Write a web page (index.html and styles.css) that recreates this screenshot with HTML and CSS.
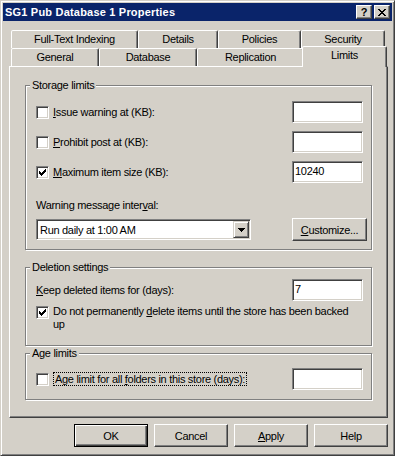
FILE: index.html
```html
<!DOCTYPE html>
<html lang="en">
<head>
    <meta charset="UTF-8">
    <title>SG1 Pub Database 1 Properties</title>
    <link rel="stylesheet" href="styles.css">
</head>
<body>
<div class="window">
    <div class="titlebar">
        <span class="title">SG1 Pub Database 1 Properties</span>
        <span class="caption">
            <span class="cap-btn help">?</span>
            <span class="cap-btn close">
                <svg width="8" height="7" viewBox="0 0 8 7"><path d="M0 0h2v1H0z M6 0h2v1H6z M1 1h2v1H1z M5 1h2v1H5z M2 2h4v1H2z M3 3h2v1H3z M2 4h4v1H2z M1 5h2v1H1z M5 5h2v1H5z M0 6h2v1H0z M6 6h2v1H6z" fill="#000"/></svg>
            </span>
        </span>
    </div>

    <div class="dialog">
        <div class="tabs">
            <div class="tab-row">
                <span class="tab t-fulltext">Full-Text Indexing</span>
                <span class="tab t-details">Details</span>
                <span class="tab t-policies">Policies</span>
                <span class="tab t-security">Security</span>
            </div>
            <div class="tab-row">
                <span class="tab t-general">General</span>
                <span class="tab t-database">Database</span>
                <span class="tab t-replication">Replication</span>
                <span class="tab t-limits active">Limits</span>
            </div>
        </div>

        <div class="panel">
            <fieldset class="group storage">
                <legend>Storage limits</legend>
                <div class="row">
                    <label class="check"><span class="box"></span><span><u>I</u>ssue warning at (KB):</span></label>
                    <span class="edit"></span>
                </div>
                <div class="row">
                    <label class="check"><span class="box"></span><span><u>P</u>rohibit post at (KB):</span></label>
                    <span class="edit"></span>
                </div>
                <div class="row">
                    <label class="check"><span class="box checked"><svg width="11" height="11" viewBox="0 0 11 11"><path d="M2 4h1v3H2z M3 5h1v3H3z M4 6h1v3H4z M5 5h1v3H5z M6 4h1v3H6z M7 3h1v3H7z M8 2h1v3H8z" fill="#000"/></svg></span><span><u>M</u>aximum item size (KB):</span></label>
                    <span class="edit">10240</span>
                </div>
                <p class="interval-label">Warning message inter<u>v</u>al:</p>
                <div class="combo-row">
                    <span class="combo">
                        <span class="value">Run daily at 1:00 AM</span>
                        <span class="drop"><svg width="7" height="4" viewBox="0 0 7 4"><path d="M0 0h7v1H0z M1 1h5v1H1z M2 2h3v1H2z M3 3h1v1H3z" fill="#000"/></svg></span>
                    </span>
                    <span class="btn customize"><span><u>C</u>ustomize...</span></span>
                </div>
            </fieldset>

            <fieldset class="group deletion">
                <legend>Deletion settings</legend>
                <div class="row">
                    <span class="plain"><u>K</u>eep deleted items for (days):</span>
                    <span class="edit">7</span>
                </div>
                <label class="check wrap">
                    <span class="box checked"><svg width="11" height="11" viewBox="0 0 11 11"><path d="M2 4h1v3H2z M3 5h1v3H3z M4 6h1v3H4z M5 5h1v3H5z M6 4h1v3H6z M7 3h1v3H7z M8 2h1v3H8z" fill="#000"/></svg></span>
                    <span class="text">Do not permanently <u>d</u>elete items until the store has been backed up</span>
                </label>
            </fieldset>

            <fieldset class="group age">
                <legend>Age limits</legend>
                <div class="row">
                    <label class="check"><span class="box"></span><span class="focus">Age limit for all <u>f</u>olders in this store (days):</span></label>
                    <span class="edit"></span>
                </div>
            </fieldset>
        </div>

        <div class="buttons">
            <span class="btn default">OK</span>
            <span class="btn">Cancel</span>
            <span class="btn"><span><u>A</u>pply</span></span>
            <span class="btn">Help</span>
        </div>
    </div>
</div>
</body>
</html>
```

FILE: styles.css
```css
/* classic windows dialog, everything drawn with borders and inset shadows */
*{
    margin: 0;
    padding: 0;
    box-sizing: border-box;
}
body{
    background: #d4d0c8;
    font-family: "Liberation Sans", Arial, sans-serif;
    font-size: 11px;
    letter-spacing: -0.3px;
    color: #000;
}
u{text-decoration: underline;}

.window{
    width: 395px;
    height: 456px;
    padding: 2px;
    background: #d4d0c8;
    border: 1px solid;
    border-color: #d4d0c8 #404040 #404040 #d4d0c8;
    box-shadow: inset 1px 1px #fff, inset -1px -1px #808080;
}

/* title bar */
.titlebar{
    display: flex;
    align-items: center;
    height: 18px;
    padding-left: 2px;
    background: #0a246a;
}
.title{
    color: #fff;
    font-weight: bold;
    letter-spacing: 0.2px;
    line-height: 18px;
}
.caption{
    display: flex;
    gap: 2px;
    margin-left: auto;
    padding-right: 2px;
}
.cap-btn{
    display: flex;
    align-items: center;
    justify-content: center;
    width: 16px;
    height: 14px;
    background: #d4d0c8;
    border: 1px solid;
    border-color: #fff #404040 #404040 #fff;
    box-shadow: inset -1px -1px #808080;
}
.cap-btn.help{
    font-weight: bold;
    font-size: 11px;
    letter-spacing: 0;
    line-height: 12px;
}
.cap-btn svg{display: block;}

/* dialog body */
.dialog{
    padding: 9px 4px 0 6px;
}
.tabs{
    padding-left: 2px;
}
.tab-row{
    display: flex;
    height: 18px;
}
.tab{
    height: 18px;
    border: 1px solid;
    border-bottom: 0;
    border-color: #fff #404040 transparent #fff;
    border-radius: 2px 2px 0 0;
    box-shadow: inset -1px 0 #808080;
    background: #d4d0c8;
    text-align: center;
    line-height: 17px;
    white-space: nowrap;
}
.t-fulltext{width: 127px;}
.t-details{width: 80px;}
.t-policies{width: 83px;}
.t-security{width: 84px;}
.t-general{width: 88px;}
.t-database{width: 98px;}
.t-replication{width: 107px;}
.t-limits{width: 81px;}
.tab.active{
    position: relative;
    z-index: 1;
    width: 85px;
    height: 21px;
    margin: -2px -2px -1px -2px;
}

.panel{
    height: 352px;
    padding: 12px 15px 0 15px;
    border: 1px solid;
    border-color: #fff #404040 #404040 #fff;
    box-shadow: inset -1px -1px #808080;
}

/* group boxes */
.group{
    border: 1px solid #808080;
    box-shadow: 1px 1px 0 #fff, inset 1px 1px 0 #fff;
    padding: 0 8px 0 10px;
}
.group legend{
    margin-left: -6px;
    padding: 0 2px;
    line-height: 13px;
    background: #d4d0c8;
}
.storage{padding-top: 5px; padding-bottom: 8px;}
.deletion{margin-top: 11px; padding-top: 1px; padding-bottom: 14px;}
.age{margin-top: 1px; padding-top: 4px; padding-bottom: 5px;}

.row{
    display: flex;
    align-items: center;
    height: 30px;
}
.check{
    display: flex;
    align-items: center;
    gap: 4px;
    flex: 1;
    white-space: nowrap;
}
.box{
    flex: none;
    width: 13px;
    height: 13px;
    background: #fff;
    border: 1px solid;
    border-color: #808080 #fff #fff #808080;
    box-shadow: inset 1px 1px #404040, inset -1px -1px #d4d0c8;
}
.box svg{display: block;}
.plain{flex: 1;}
.focus{
    border: 1px dotted #000;
    padding: 0 1px;
    line-height: 12px;
}

.edit{
    flex: none;
    width: 71px;
    height: 22px;
    padding: 0 2px;
    background: #fff;
    border: 1px solid;
    border-color: #808080 #fff #fff #808080;
    box-shadow: inset 1px 1px #404040, inset -1px -1px #d4d0c8;
    line-height: 19px;
}

.interval-label{
    margin-top: 11px;
    line-height: 14px;
}
.combo-row{
    display: flex;
    align-items: center;
    justify-content: space-between;
    height: 23px;
    margin-top: 6px;
}
.combo{
    display: flex;
    align-items: center;
    width: 215px;
    height: 21px;
    padding: 0 1px 0 3px;
    background: #fff;
    border: 1px solid;
    border-color: #808080 #fff #fff #808080;
    box-shadow: inset 1px 1px #404040, inset -1px -1px #d4d0c8;
}
.combo .value{flex: 1;}
.drop{
    display: flex;
    align-items: center;
    justify-content: center;
    width: 16px;
    height: 17px;
    background: #d4d0c8;
    border: 1px solid;
    border-color: #d4d0c8 #404040 #404040 #d4d0c8;
    box-shadow: inset 1px 1px #fff, inset -1px -1px #808080;
}
.drop svg{display: block;}

.check.wrap{
    align-items: flex-start;
    white-space: normal;
}
.check.wrap .box{margin-top: 1px;}
.check.wrap .text{
    width: 302px;
    line-height: 13px;
}

/* push buttons */
.btn{
    display: flex;
    align-items: center;
    justify-content: center;
    width: 74px;
    height: 23px;
    border: 1px solid;
    border-color: #fff #404040 #404040 #fff;
    box-shadow: inset -1px -1px #808080;
}
.btn.default{
    border-color: #000;
    box-shadow: inset 1px 1px #fff, inset -1px -1px #404040, inset -2px -2px #808080;
}
.customize{
    width: 75px;
    margin-right: -4px;
}
.buttons{
    display: flex;
    justify-content: flex-end;
    gap: 6px;
    margin-top: 6px;
}
```
